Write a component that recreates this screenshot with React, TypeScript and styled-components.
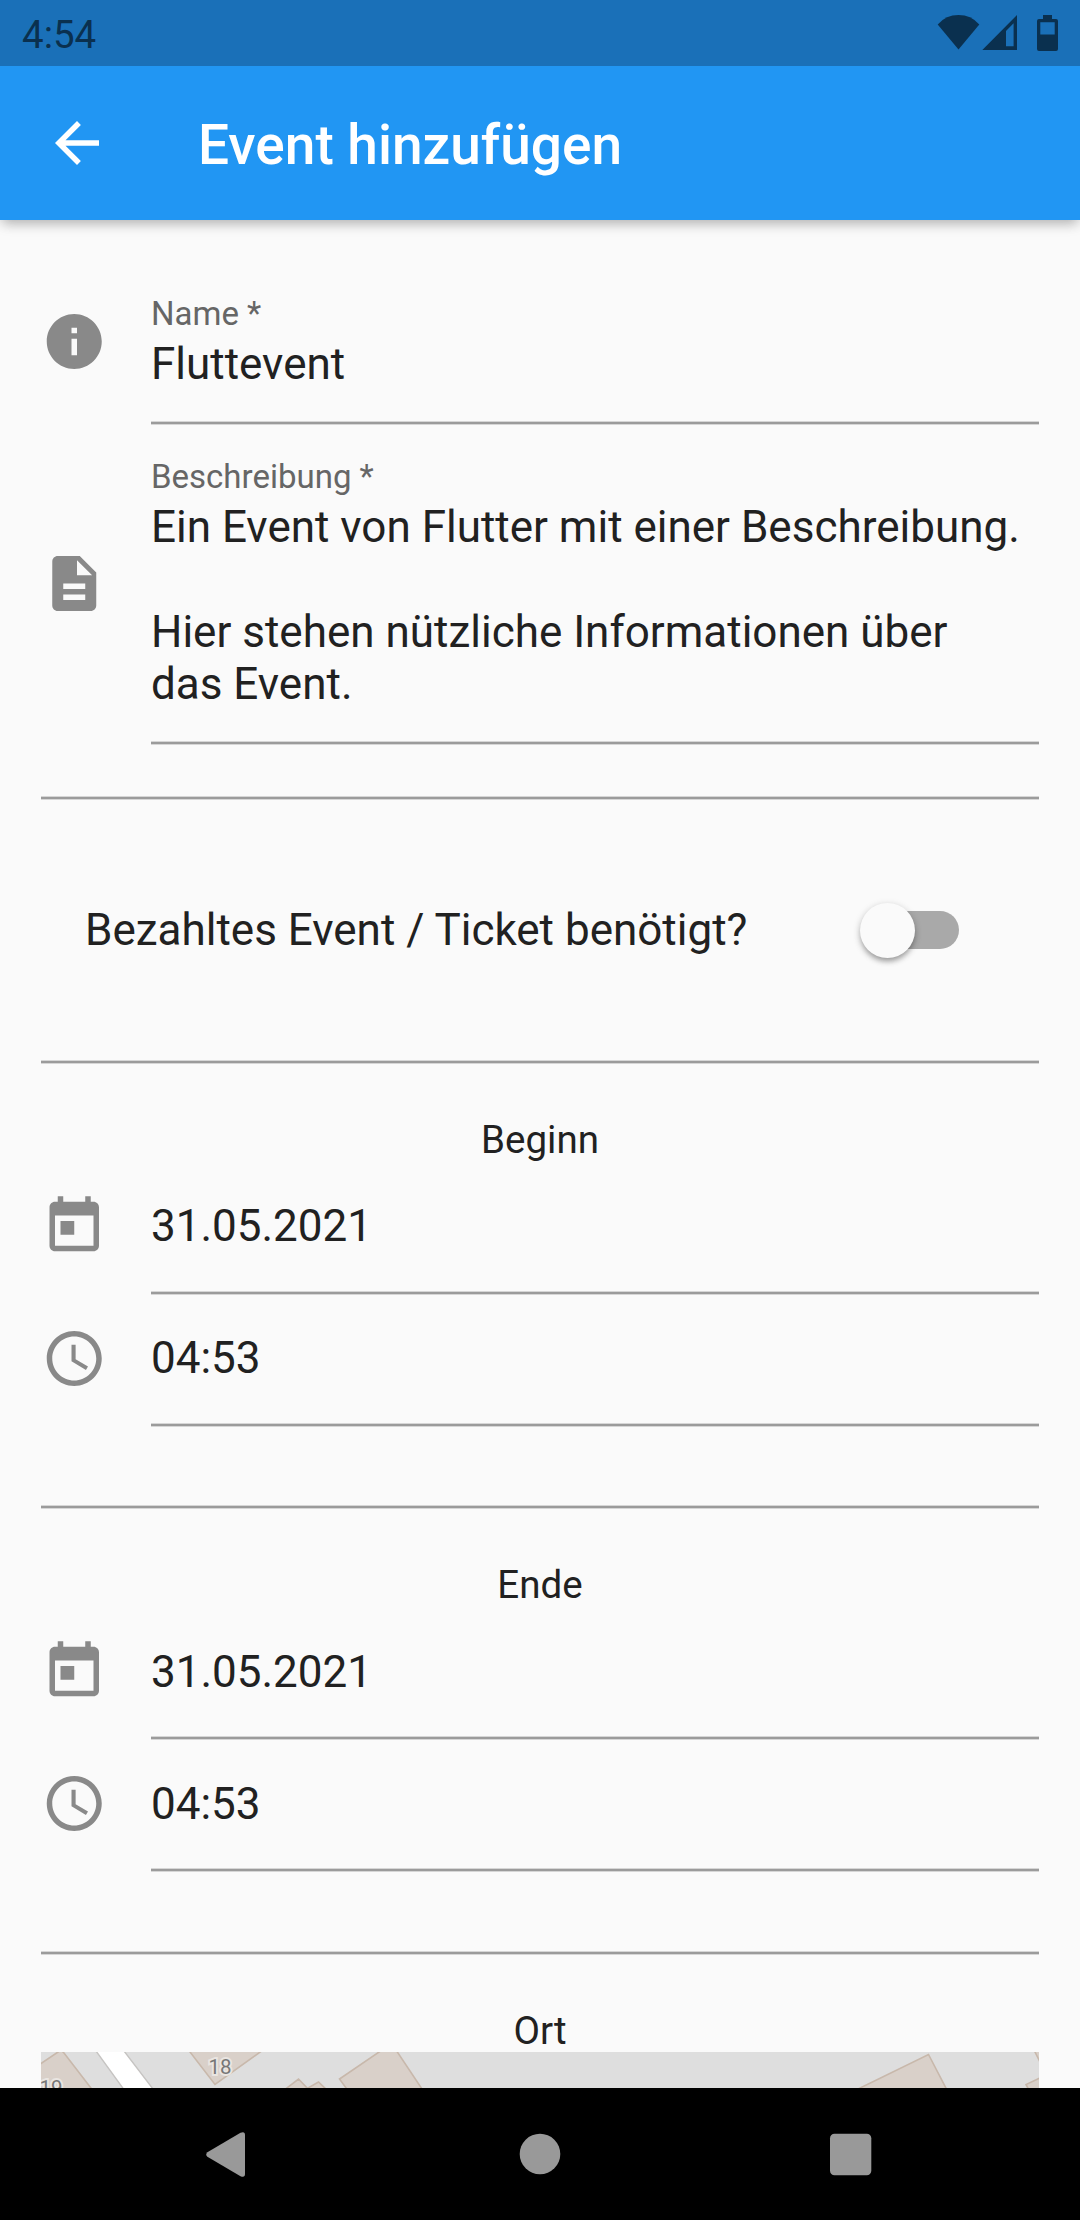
import React from "react";
import styled, { createGlobalStyle } from "styled-components";

const GlobalStyle = createGlobalStyle`
  *, *::before, *::after { box-sizing: border-box; }
  html, body { margin: 0; padding: 0; background: #fafafa; }
  body { font-family: Roboto, "Liberation Sans", sans-serif; color: #212121; }
`;

const Screen = styled.div`
  width: 1080px;
  height: 2220px;
  display: flex;
  flex-direction: column;
  overflow: hidden;
  background: #fafafa;
`;

const StatusBar = styled.header`
  flex: none;
  height: 66px;
  padding: 3px 22px 0 22px;
  display: flex;
  align-items: center;
  justify-content: space-between;
  background: #1a70b8;
  color: #0a304f;
  z-index: 2;
`;

const Clock = styled.span`
  font-size: 38.5px;
  line-height: 46px;
`;

const StatusIcons = styled.svg`
  display: block;
  width: 121px;
  height: 36px;
  margin-top: -3px;
`;

const AppBar = styled.div`
  flex: none;
  height: 154px;
  padding: 0 44px;
  display: flex;
  align-items: center;
  gap: 88px;
  background: #2196f3;
  color: #fff;
  box-shadow: 0 5.5px 11px -2.75px rgba(0, 0, 0, 0.2), 0 2.75px 14px rgba(0, 0, 0, 0.14);
  z-index: 1;
`;

const BackButton = styled.button`
  width: 66px;
  height: 66px;
  padding: 0;
  border: 0;
  background: none;
  color: inherit;
`;

const Title = styled.h1`
  margin: 4px 0 0;
  font-size: 55px;
  font-weight: 500;
  line-height: 64px;
`;

const Form = styled.main`
  flex: 1;
  min-height: 0;
  overflow: hidden;
  padding: 0 41px;
  display: flex;
  flex-direction: column;
`;

const Field = styled.div<{ $height: number }>`
  flex: none;
  height: ${(p) => p.$height}px;
  display: grid;
  grid-template-columns: 66px 1fr;
  column-gap: 44px;
`;

const FieldIcon = styled.div<{ $top: number }>`
  padding-top: ${(p) => p.$top}px;
  color: #898989;
`;

const Glyph = styled.svg`
  display: block;
  width: 66px;
  height: 66px;
  fill: currentColor;
`;

const rule = `linear-gradient(#d6d6d6 1px, #9b9b9b 1px, #9b9b9b 3px, #d6d6d6 3px)`;

const FieldBody = styled.div<{ $top: number }>`
  display: flex;
  flex-direction: column;
  padding-top: ${(p) => p.$top}px;
  background: ${rule} bottom / 100% 4px no-repeat;
`;

const Label = styled.label`
  font-size: 33px;
  line-height: 40px;
  color: #666;
`;

const Value = styled.div`
  margin-top: 4px;
  font-size: 44px;
  line-height: 52.4px;
  white-space: pre-line;
`;

const Divider = styled.hr<{ $gap: number }>`
  flex: none;
  width: 100%;
  height: 4px;
  margin: ${(p) => p.$gap}px 0 0;
  border: 0;
  background: ${rule};
`;

const SwitchRow = styled.div`
  flex: none;
  height: 260px;
  padding: 0 80px 0 44px;
  display: flex;
  align-items: center;
  justify-content: space-between;
  font-size: 44px;
  line-height: 52px;
`;

const Track = styled.div`
  width: 91px;
  height: 38px;
  border-radius: 19px;
  background: #a9a9a9;
  display: flex;
  align-items: center;
`;

const Thumb = styled.div`
  flex: none;
  width: 55px;
  height: 55px;
  margin-left: -8px;
  border-radius: 50%;
  background: #fafafa;
  box-shadow: 0 5px 5px -2px rgba(0, 0, 0, 0.2), 0 3px 6px rgba(0, 0, 0, 0.16), 0 2px 9px rgba(0, 0, 0, 0.12);
`;

const SectionTitle = styled.h2<{ $height: number }>`
  flex: none;
  height: ${(p) => p.$height}px;
  margin: 0;
  padding-top: 53px;
  text-align: center;
  font-size: 38.5px;
  font-weight: 400;
  line-height: 46px;
`;

const MapView = styled.svg`
  flex: none;
  display: block;
  width: 998px;
  height: 36px;
`;

const NavBar = styled.nav`
  flex: none;
  height: 132px;
  background: #000;
`;

const NavIcons = styled.svg`
  display: block;
  width: 1080px;
  height: 132px;
  fill: #999;
`;

const paths = {
  back: "M20 11H7.83l5.59-5.59L12 4l-8 8 8 8 1.41-1.41L7.83 13H20v-2z",
  info: "M12 2C6.48 2 2 6.48 2 12s4.48 10 10 10 10-4.48 10-10S17.52 2 12 2zm1 15h-2v-6h2v6zm0-8h-2V7h2v2z",
  description:
    "M14 2H6c-1.1 0-1.99.9-1.99 2L4 20c0 1.1.89 2 1.99 2H18c1.1 0 2-.9 2-2V8l-6-6zm2 16H8v-2h8v2zm0-4H8v-2h8v2zm-3-5V3.5L18.5 9H13z",
  today:
    "M19 3h-1V1h-2v2H8V1H6v2H5c-1.11 0-1.99.9-1.99 2L3 19c0 1.1.89 2 2 2h14c1.1 0 2-.9 2-2V5c0-1.1-.9-2-2-2zm0 16H5V8h14v11zM7 10h5v5H7z",
  schedule:
    "M11.99 2C6.47 2 2 6.48 2 12s4.47 10 9.99 10C17.52 22 22 17.52 22 12S17.52 2 11.99 2zM12 20c-4.42 0-8-3.58-8-8s3.58-8 8-8 8 3.58 8 8-3.58 8-8 8zm.5-13H11v6l5.25 3.15.75-1.23-4.5-2.67z",
};

const Icon = ({ name, dx = -0.09, dy = -0.2 }: { name: keyof typeof paths; dx?: number; dy?: number }) => (
  <Glyph viewBox={`${dx} ${dy} 24 24`}>
    <path d={paths[name]} />
  </Glyph>
);

const DateTimeFields = ({ date, time, shift = 0 }: { date: string; time: string; shift?: number }) => (
  <>
    <Field $height={112}>
      <FieldIcon $top={10}>
        <Icon name="today" />
      </FieldIcon>
      <FieldBody $top={13 + shift}>
        <Value>{date}</Value>
      </FieldBody>
    </Field>
    <Field $height={132}>
      <FieldIcon $top={30}>
        <Icon name="schedule" />
      </FieldIcon>
      <FieldBody $top={33 + shift}>
        <Value>{time}</Value>
      </FieldBody>
    </Field>
  </>
);

export default function App() {
  return (
    <>
      <GlobalStyle />
      <Screen>
        <StatusBar>
          <Clock>4:54</Clock>
          <StatusIcons viewBox="937 15 121 36" fill="currentColor">
            <path d="M937.7 24.4Q946 15 958.5 15T979.3 24.4L958.5 49.6Z" />
            <path
              fillRule="evenodd"
              d="M1017 15V50H982.3ZM1013.6 23.3L1006 31V46.3H1013.6Z"
            />
            <path
              fillRule="evenodd"
              d="M1043 15H1052V19H1056Q1058 19 1058 21V49Q1058 51 1056 51H1039Q1037 51 1037 49V21Q1037 19 1039 19H1043ZM1040.3 22.3V34.4H1054.7V22.3Z"
            />
          </StatusIcons>
        </StatusBar>
        <AppBar>
          <BackButton aria-label="Zurück">
            <Icon name="back" dx={0} dy={0} />
          </BackButton>
          <Title>Event hinzufügen</Title>
        </AppBar>
        <Form>
          <Field $height={205}>
            <FieldIcon $top={88}>
              <Icon name="info" />
            </FieldIcon>
            <FieldBody $top={74}>
              <Label>Name *</Label>
              <Value>Fluttevent</Value>
            </FieldBody>
          </Field>
          <Field $height={320}>
            <FieldIcon $top={125}>
              <Icon name="description" />
            </FieldIcon>
            <FieldBody $top={32}>
              <Label>Beschreibung *</Label>
              <Value>
                {"Ein Event von Flutter mit einer Beschreibung.\n\nHier stehen nützliche Informationen über\ndas Event."}
              </Value>
            </FieldBody>
          </Field>
          <Divider $gap={51} />
          <SwitchRow>
            <span>Bezahltes Event / Ticket benötigt?</span>
            <Track role="switch" aria-checked={false}>
              <Thumb />
            </Track>
          </SwitchRow>
          <Divider $gap={0} />
          <SectionTitle $height={119}>Beginn</SectionTitle>
          <DateTimeFields date="31.05.2021" time="04:53" />
          <Divider $gap={78} />
          <SectionTitle $height={119}>Ende</SectionTitle>
          <DateTimeFields date="31.05.2021" time="04:53" shift={1} />
          <Divider $gap={79} />
          <SectionTitle $height={97}>Ort</SectionTitle>
          <MapView viewBox="41 2052 998 36">
            <rect x="41" y="2052" width="998" height="36" fill="#dedede" />
            <path d="M96 2051L123.500 2089H153L124 2051Z" fill="#fff" stroke="#c6c4c2" strokeWidth="1.4" />
            <g fill="#d9d0c9" stroke="#c8b8ab" strokeWidth="1.6">
              <path d="M36 2067L58 2052L61 2050L64 2053L94 2092H36Z" />
              <path d="M188.500 2050L215 2084.5L263 2050Z" />
              <path d="M283 2091L298.5 2079L311 2092L308 2088L318.500 2082L328 2091Z" />
              <path d="M382 2050L339.500 2079L349 2092H424L396 2050Z" />
              <path d="M856 2090L928.500 2054.500L948 2092Z" />
              <path d="M1034 2050L1040 2062V2050ZM1042 2077L1026 2084.500L1030 2092H1042Z" />
            </g>
            <g
              fill="#777"
              stroke="#e9e5e1"
              strokeWidth="4"
              paintOrder="stroke"
              fontFamily="Roboto, sans-serif"
              fontSize="20.5"
            >
              <text x="208.500" y="2074">18</text>
              <text x="39.500" y="2095">19</text>
            </g>
          </MapView>
        </Form>
        <NavBar>
          <NavIcons viewBox="0 2088 1080 132">
            <path d="M207.400 2152.200L240.500 2132.800Q245 2131 245 2135V2174Q245 2178 240.500 2176.200L207.400 2156.700Q205 2154.500 207.400 2152.200Z" />
            <circle cx="540" cy="2154" r="20.300" />
            <rect x="830" y="2133.700" width="41.300" height="41.500" rx="4.500" />
          </NavIcons>
        </NavBar>
      </Screen>
    </>
  );
}
